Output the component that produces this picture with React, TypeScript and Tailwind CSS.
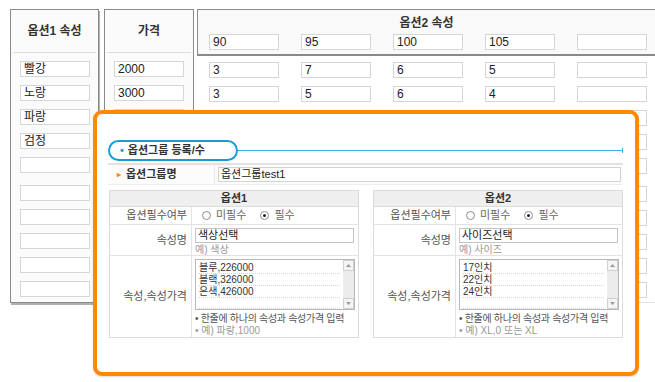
import React from 'react';

const FONT = "'Liberation Sans', 'Noto Sans CJK KR', sans-serif";

function Box({ value = '', className = '' }: { value?: string; className?: string }) {
  return (
    <div className={`h-[16px] w-[70px] border border-[#d6d6d6] bg-white pl-[3px] text-[12px] leading-[14px] text-[#222] ${className}`}>
      {value}
    </div>
  );
}

function Radio({ checked }: { checked?: boolean }) {
  return (
    <span className="inline-flex h-[9px] w-[9px] items-center justify-center rounded-full border border-[#8c8c8c] bg-white">
      {checked && <span className="h-[3px] w-[3px] rounded-full bg-[#222]" />}
    </span>
  );
}

function ScrollArrow({ up }: { up?: boolean }) {
  return (
    <div className="flex h-[11px] w-[11px] items-center justify-center border border-[#d0d0d0] bg-[#f4f4f4]">
      <svg width="5" height="3" viewBox="0 0 5 3">
        <path d={up ? 'M0 3 L2.5 0 L5 3 Z' : 'M0 0 L2.5 3 L5 0 Z'} fill="#9a9a9a" />
      </svg>
    </div>
  );
}

type OptTableProps = {
  title: string;
  attrName: string;
  hint: string;
  lines: string[];
  example: string;
};

function OptionTable({ title, attrName, hint, lines, example }: OptTableProps) {
  return (
    <div className="w-[250px] border border-[#dcdcdc] text-[11px] text-[#555]">
      <div className="flex h-[16px] items-center justify-center border-b border-[#dcdcdc] bg-[#efefef] font-bold text-[#333]">
        {title}
      </div>
      <div className="flex h-[18px] border-b border-[#e3e3e3]">
        <div className="flex w-[82px] items-center justify-end border-r border-[#e3e3e3] pr-[4px]">옵션필수여부</div>
        <div className="flex items-center pl-[10px]">
          <Radio />
          <span className="ml-[5px] text-[#666]">미필수</span>
          <span className="ml-[14px] flex"><Radio checked /></span>
          <span className="ml-[5px] text-[#666]">필수</span>
        </div>
      </div>
      <div className="flex h-[31px] border-b border-[#e3e3e3]">
        <div className="flex w-[82px] items-center justify-end border-r border-[#e3e3e3] pr-[4px]">속성명</div>
        <div className="flex flex-col pl-[3px] pt-[3px]">
          <div className="h-[15px] w-[159px] border border-[#c4c4c4] pl-[2px] text-[11px] leading-[13px] text-[#222]">{attrName}</div>
          <div className="mt-[1px] text-[10px] leading-[11px] text-[#999]">{hint}</div>
        </div>
      </div>
      <div className="flex h-[81px]">
        <div className="flex w-[82px] items-center justify-end border-r border-[#e3e3e3] pr-[4px]">속성,속성가격</div>
        <div className="flex flex-col pl-[3px] pt-[3px]">
          <div className="flex h-[51px] w-[160px] border border-[#b8b8b8] bg-white">
            <div className="flex flex-1 flex-col px-[3px] pt-[2px]">
              {[0, 1, 2, 3].map((i) => (
                <div key={i} className="h-[12px] border-b border-dotted border-[#d5d5d5] text-[10px] leading-[11px] text-[#333]">
                  {lines[i] ?? ''}
                </div>
              ))}
            </div>
            <div className="flex w-[11px] flex-col justify-between bg-[#ececec]">
              <ScrollArrow up />
              <ScrollArrow />
            </div>
          </div>
          <div className="mt-[3px] whitespace-nowrap text-[10px] leading-[12px] tracking-[-0.3px] text-[#555]">• 한줄에 하나의 속성과 속성가격 입력</div>
          <div className="whitespace-nowrap text-[10px] leading-[12px] text-[#999]">• {example}</div>
        </div>
      </div>
    </div>
  );
}

export default function App() {
  const colors = ['빨강', '노랑', '파랑', '검정', '', '', '', '', '', ''];
  const sizes = ['90', '95', '100', '105', ''];
  const stock = [
    ['3', '7', '6', '5', ''],
    ['3', '5', '6', '4', ''],
    ['', '', '', '', ''],
    ['', '', '', '', ''],
    ['', '', '', '', ''],
    ['', '', '', '', ''],
    ['', '', '', '', ''],
    ['', '', '', '', ''],
    ['', '', '', '', ''],
    ['', '', '', '', ''],
  ];

  return (
    <div className="relative h-[382px] w-[655px] overflow-hidden bg-white" style={{ fontFamily: FONT }}>
      {/* background option grid */}
      <div className="flex pl-[10px] pt-[9px]">
        <div className="flex h-[294px] w-[89px] flex-col border border-[#8a8a8a] bg-[#fbfbfb] shadow-[1px_2px_0_#b0b0b0]">
          <div className="mx-[2px] flex h-[43px] items-center justify-center border-b border-[#dcdcdc] text-[12px] font-bold text-[#333]">
            옵션1 속성
          </div>
          <div className="flex flex-col gap-[8px] pl-[9px] pt-[8px]">
            {colors.map((c, i) => (
              <Box key={i} value={c} className={i === 5 ? 'mt-[4px]' : ''} />
            ))}
          </div>
        </div>

        <div className="ml-[5px] flex h-[294px] w-[90px] flex-col border border-[#8a8a8a] bg-[#fbfbfb]">
          <div className="mx-[2px] flex h-[43px] items-center justify-center border-b border-[#dcdcdc] text-[12px] font-bold text-[#333]">
            가격
          </div>
          <div className="flex flex-col gap-[8px] pl-[9px] pt-[8px]">
            <Box value="2000" />
            <Box value="3000" />
            <Box />
          </div>
        </div>

        <div className="ml-[3px] flex flex-1 flex-col">
          <div className="flex flex-col border-b-2 border-l border-t border-[#8a8a8a] bg-[#f9f9f9] pb-[4px] pt-[5px]">
            <div className="flex h-[16px] items-center justify-center text-[12px] font-bold text-[#333]">옵션2 속성</div>
            <div className="mt-[3px] flex gap-[22px] pl-[11px]">
              {sizes.map((s, i) => (
                <Box key={i} value={s} />
              ))}
            </div>
          </div>
          <div className="flex flex-col gap-[8px] pl-[12px] pt-[6px]">
            {stock.map((row, r) => (
              <div key={r} className={`flex gap-[22px] ${r === 5 ? 'mt-[4px]' : ''}`}>
                {row.map((v, i) => (
                  <Box key={i} value={v} />
                ))}
              </div>
            ))}
          </div>
          <div className="mt-[4px] border-b border-[#e2e2e2]" />
        </div>
      </div>

      {/* highlighted option group panel */}
      <div className="absolute left-[93px] top-[110px] h-[266px] w-[546px] rounded-[9px] border-4 border-[#ff8a00] bg-white pl-[11px] pr-[12px] pt-[26px] shadow-[0_1px_2px_rgba(0,0,0,0.15)]">
        <div className="flex h-[21px] items-center">
          <div className="flex h-[21px] w-[130px] items-center rounded-full border-2 border-[#1a9ad6] bg-white pl-[10px] text-[11px] font-bold text-[#333]">
            <span className="mr-[4px] text-[#1a9ad6]">•</span>옵션그룹 등록/수
          </div>
          <div className="h-[1px] flex-1 bg-[#35b0e0]" />
          <div className="h-[5px] w-[1px] bg-[#35b0e0]" />
        </div>

        <div className="mt-[2px] flex h-[22px] border-b border-t-2 border-[#e2e2e2] border-b-[#eeeeee] bg-[#fcfcfc]">
          <div className="flex w-[107px] items-center border-r border-[#e8e8e8] pl-[9px] text-[11px] font-bold text-[#333]">
            <span className="mr-[5px] text-[8px] text-[#ff8a00]">▸</span>옵션그룹명
          </div>
          <div className="flex items-center pl-[3px]">
            <div className="h-[15px] w-[403px] border border-[#d2d2d2] bg-white pl-[2px] text-[11px] leading-[13px] text-[#222]">
              옵션그룹test1
            </div>
          </div>
        </div>

        <div className="mt-[5px] flex justify-between pl-[1px]">
          <OptionTable
            title="옵션1"
            attrName="색상선택"
            hint="예) 색상"
            lines={['블루,226000', '블랙,326000', '은색,426000']}
            example="예) 파랑,1000"
          />
          <OptionTable
            title="옵션2"
            attrName="사이즈선택"
            hint="예) 사이즈"
            lines={['17인치', '22인치', '24인치']}
            example="예) XL,0 또는 XL"
          />
        </div>
      </div>
    </div>
  );
}
